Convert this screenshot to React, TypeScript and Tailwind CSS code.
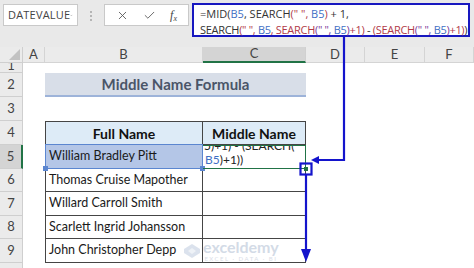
import { ChevronDown, X, Check } from 'lucide-react'

const font = { fontFamily: '"Lato", "Liberation Sans", sans-serif' }

const R = ({ children }: { children: React.ReactNode }) => <span className="text-[#b23a48]">{children}</span>
const P = ({ children }: { children: React.ReactNode }) => <span className="text-[#7a3a9a]">{children}</span>
const B = () => <span className="text-[#3f6fc4]">B5</span>

const RowHead = ({ n, active = false }: { n: number; active?: boolean }) => (
  <div
    className={`flex items-center justify-center border-b border-r border-[#cfcfcf] text-[13px] text-[#444] ${
      active ? 'border-r-2 border-r-[#217346] bg-[#d4d4d4]' : 'bg-[#ebebeb]'
    }`}
  >
    {n}
  </div>
)

const names = ['Thomas Cruise Mapother', 'Willard Carroll Smith', 'Scarlett Ingrid Johansson', 'John Christopher Depp']

export default function App() {
  return (
    <div className="relative h-[268px] w-[474px] overflow-hidden bg-[#e9e9e9]" style={font}>
      {/* toolbar */}
      <div className="flex h-[47px] items-start pl-[3px] pt-[3px]">
        <div className="mt-[1px] flex h-[22px] w-[75px] items-center justify-between border border-[#c9c9c9] bg-white pl-[4px] pr-[4px] text-[11px] text-[#444]">
          <span className="tracking-[0.2px]" style={{ fontFamily: '"Open Sans", sans-serif' }}>DATEVALUE</span>
          <ChevronDown size={9} strokeWidth={3} className="text-[#666]" />
        </div>
        <div className="mx-[12px] mt-[8px] flex flex-col gap-[2px]">
          <span className="h-[2px] w-[2px] bg-[#b5b5b5]" />
          <span className="h-[2px] w-[2px] bg-[#b5b5b5]" />
          <span className="h-[2px] w-[2px] bg-[#b5b5b5]" />
        </div>
        <div className="mt-[1px] flex h-[22px] w-[85px] items-center justify-around border border-[#c9c9c9] bg-white px-[4px] text-[#555]">
          <X size={13} strokeWidth={1.6} />
          <Check size={13} strokeWidth={1.6} />
          <span className="text-[12px] italic text-[#444]" style={{ fontFamily: '"Liberation Serif", serif' }}>
            f<sub className="text-[8px]">x</sub>
          </span>
        </div>
        <div
          className="ml-[3px] h-[34px] w-[278px] whitespace-nowrap border-2 border-[#1818c0] bg-white pl-[6px] pt-[1px] text-[11px] leading-[16px] text-[#333]"
          style={{ fontFamily: '"Open Sans", sans-serif' }}
        >
          <div>
            =MID(<B />, SEARCH<R>(" ", </R><B /><R>)</R> + 1,
          </div>
          <div className="tracking-[-0.3px]">
            SEARCH<R>(" ", </R><B /><R>, SEARCH</R><P>(" ", </P><B /><P>)</P><R>+1)</R> - <R>(SEARCH</R><P>(" ", </P><B /><P>)</P><R>+1)</R>)
          </div>
        </div>
      </div>

      {/* sheet */}
      <div className="grid h-[221px] grid-cols-[23px_22px_158px_103px_59px_60px_1fr] grid-rows-[16px_10px_24px_24px_24px_24px_23px_24px_23px_24px_1fr] bg-white">
        {/* column headers */}
        <div className="relative border-b border-r border-[#cfcfcf] bg-[#ebebeb]">
          <div className="absolute bottom-[2px] right-[2px] h-0 w-0 border-b-[11px] border-l-[11px] border-b-[#c2c2c2] border-l-transparent" />
        </div>
        {['A', 'B', 'C', 'D', 'E', 'F'].map((c) => (
          <div
            key={c}
            className={`flex items-center justify-center border-r text-[13px] text-[#444] ${
              c === 'C'
                ? 'border-b-2 border-[#d0d0d0] border-b-[#217346] bg-[#d4d4d4]'
                : 'border-b border-[#d4d4d4] bg-[#ebebeb]'
            }`}
          >
            {c}
          </div>
        ))}

        {/* row 1 */}
        <div className="overflow-hidden border-b border-r border-[#cfcfcf] bg-[#ebebeb] text-center text-[13px] leading-[4px] text-[#444]">
          1
        </div>
        <div className="col-span-6" />

        {/* row 2 */}
        <RowHead n={2} />
        <div />
        <div className="col-span-2 flex items-center justify-center border-b-2 border-[#9db3d9] bg-[#d8dee8] text-[15px] font-bold text-[#4a5568]">
          Middle Name Formula
        </div>
        <div className="col-span-3" />

        {/* row 3 */}
        <RowHead n={3} />
        <div className="col-span-6" />

        {/* row 4 */}
        <RowHead n={4} />
        <div />
        <div className="flex items-center justify-center border border-[#454545] bg-[#ddebf7] text-[14px] font-bold text-[#111]">
          Full Name
        </div>
        <div className="flex items-center justify-center border-y border-r border-[#454545] bg-[#ddebf7] text-[14px] font-bold text-[#111]">
          Middle Name
        </div>
        <div className="col-span-3" />

        {/* row 5 */}
        <RowHead n={5} active />
        <div />
        <div className="relative flex items-center whitespace-nowrap border-x border-b border-[#454545] bg-[#b4c6e7] pl-[3px] text-[12.5px] text-[#1a1a1a]">
          William Bradley Pitt
          <div className="absolute inset-[-1px] border border-[#5b86d0]" />
          <span className="absolute bottom-[-3px] left-[-3px] h-[5px] w-[5px] bg-[#5b86d0]" />
          <span className="absolute bottom-[-3px] right-[-3px] h-[5px] w-[5px] bg-[#5b86d0]" />
        </div>
        <div className="relative flex flex-col justify-end overflow-hidden whitespace-nowrap border border-l-0 border-[#217346] pb-[1px] pl-[2px] text-[12px] leading-[14px] text-[#222]">
          <div className="-translate-x-[1px]">
            5)+1) - (SEARCH(" ",
          </div>
          <div>
            <B />
            )+1))
          </div>
        </div>
        <div className="col-span-3" />

        {/* rows 6-9 */}
        {names.map((n, i) => (
          <div key={n} className="contents">
            <RowHead n={6 + i} />
            <div />
            <div className="flex items-center whitespace-nowrap border-x border-b border-[#454545] pl-[3px] text-[12.5px] text-[#1a1a1a]">
              {n}
            </div>
            <div className="border-b border-r border-[#454545]" />
            <div className="col-span-3" />
          </div>
        ))}

        {/* row 10 */}
        <div className="border-r border-[#cfcfcf] bg-[#ebebeb]" />
        <div className="col-span-6" />
      </div>

      {/* watermark */}
      <div className="pointer-events-none absolute left-[183px] top-[239px] flex items-center gap-[2px] opacity-50">
        <svg width="18" height="16" viewBox="0 0 18 16">
          <path d="M9 1 L17 6 L17 10 L9 15 L1 10 L1 6 Z" fill="#b9c7dc" />
          <path d="M9 5 L13 8 L9 11 L5 8 Z" fill="#dfe6f0" />
        </svg>
        <div className="flex flex-col items-center leading-none">
          <span className="text-[16px] font-bold text-[#a9b8cf]">exceldemy</span>
          <span className="mt-[1px] text-[6px] tracking-[1.5px] text-[#b5c0d0]">EXCEL · DATA · BI</span>
        </div>
      </div>

      {/* annotation arrows */}
      <svg className="pointer-events-none absolute left-0 top-0" width="474" height="268">
        <g stroke="#1414cc" strokeWidth="2.2" fill="none">
          <path d="M344 37 V160 H316" />
          <rect x="300.5" y="163.5" width="11" height="11" />
          <path d="M306 175 V252" />
        </g>
        <path d="M311 160 L319 156 L319 164 Z" fill="#1414cc" />
        <path d="M306 262 L301 249 L311 249 Z" fill="#1414cc" />
        <rect x="304" y="167" width="4" height="4" fill="#217346" />
      </svg>
    </div>
  )
}
